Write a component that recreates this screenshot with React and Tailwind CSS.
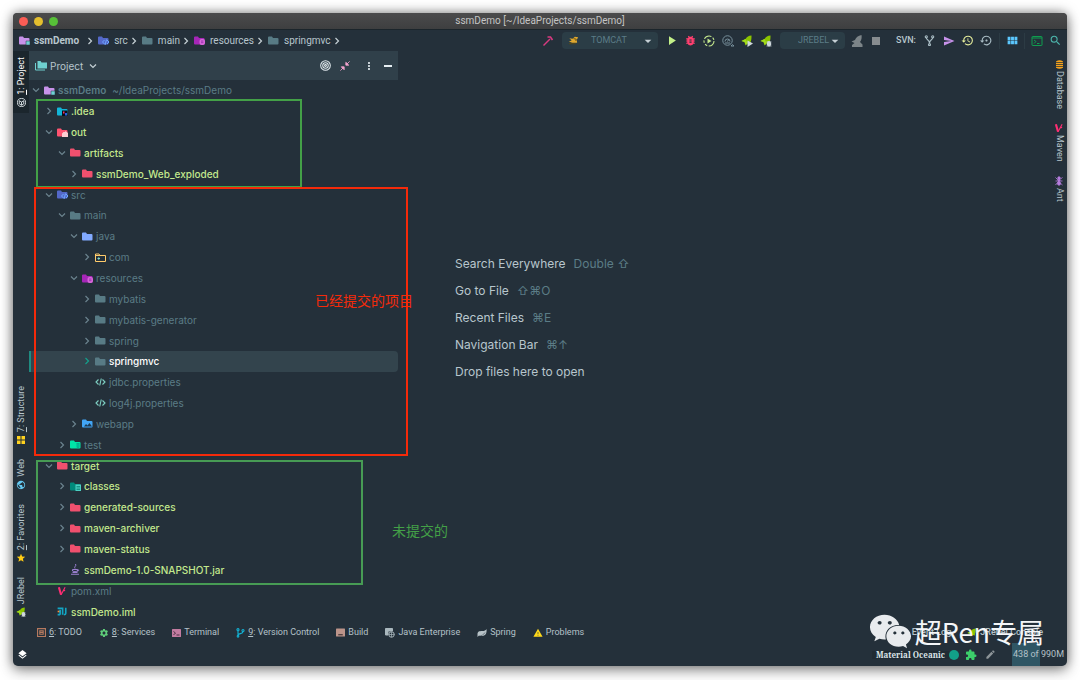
import {
  MdBugReport, MdPlayArrow, MdSearch, MdSend, MdHistory, MdSettingsBackupRestore, MdViewModule,
  MdLayers, MdStar, MdPublic, MdExtension, MdEdit, MdWarning, MdMoreVert,
  MdSettings, MdStop, MdArrowDropDown,
} from "react-icons/md";
import { FaWeixin } from "react-icons/fa";

const badges = {
  module: <path d="M14 10h8v8h-8z" fill="#6fd0d6" stroke="#24303a" />,
  src: (
    <g stroke="#6ea8ff" fill="none" strokeWidth="2">
      <path d="M13 8l-4 4 4 4M18 8l4 4-4 4M17 7l-3 11" />
    </g>
  ),
  resources: (
    <g>
      <rect x="11" y="6" width="11" height="12" rx="4" fill="#d667d8" />
      <path d="M14 10h5M14 13h5M16 9v6" stroke="#8e24aa" />
    </g>
  ),
  idea: (
    <g>
      <path d="M10 7h11v11H10z" fill="#0b0f1c" />
      <path d="M12 9h3v4h-3z" fill="#fe315d" />
      <path d="M16 12h4v5h-4z" fill="#2a62e0" />
    </g>
  ),
  out: <path d="M10 18v-7l3-3h3l1-2 5 4v8z" fill="#ffcdd2" />,
  lines: (
    <g>
      <path d="M11 5h11v13H11z" fill="#4dd0c4" />
      <path d="M13 9h7M13 12h7M13 15h7" stroke="#00796b" strokeWidth="1.4" />
    </g>
  ),
  image: <path d="M4 15l4-5 3 3 4-5 5 7z" fill="#1d3a52" />,
  test: <path d="M13 7h6M14 7v7a2 2 0 004 0V7" stroke="#00a884" fill="#00bfa5" strokeWidth="1.5" />,
};

function Folder({ color, badge }) {
  return (
    <svg viewBox="0 0 22 18" className="h-[9px] w-[11px] shrink-0" aria-hidden="true">
      <path d="M0 3a2 2 0 012-2h6l2 3h9a2 2 0 012 2v9a2 2 0 01-2 2H2a2 2 0 01-2-2z" fill={color} />
      {badge && badges[badge]}
    </svg>
  );
}

function PackageIcon() {
  return (
    <svg viewBox="0 0 22 18" className="h-[9px] w-[11px] shrink-0" fill="none" stroke="#ffcb6b" strokeWidth="2" aria-hidden="true">
      <path d="M1 2h7l2 3h11v12H1zM1 5h9" />
      <path d="M5 11h5M7.500 8.500v5" stroke="#7fd6c8" />
    </svg>
  );
}

function CodeIcon() {
  return (
    <svg viewBox="0 0 22 16" className="h-2 w-[11px] shrink-0" fill="none" stroke="#7fd1c4" strokeWidth="2.200" aria-hidden="true">
      <path d="M7 3L2 8l5 5M15 3l5 5-5 5M12.500 1l-3 14" />
    </svg>
  );
}

function JarIcon() {
  return (
    <svg viewBox="0 0 20 22" className="h-[11px] w-[10px] shrink-0" fill="none" stroke="#9a7fd0" strokeWidth="2" aria-hidden="true">
      <path d="M11 0c3 4-4 5-1 9M5 11h10v3q-5 3-10 0zM15 11c3 0 3 3 0 4M5 17h10M2 20.500h16" />
    </svg>
  );
}

function MavenIcon() {
  return (
    <svg viewBox="0 0 16 16" className="size-[10px] shrink-0" fill="none" stroke="#ff2d73" aria-hidden="true">
      <path d="M3 2l3.500 12" strokeWidth="3.400" />
      <path d="M6.500 14L13 2M9 8l4-1" strokeWidth="1.800" />
    </svg>
  );
}

function ImlIcon() {
  return (
    <svg viewBox="0 0 16 14" className="h-[9px] w-[10px] shrink-0" fill="none" stroke="#12a5c4" strokeWidth="2.600" aria-hidden="true">
      <path d="M1 2h8v10M14 1v9q0 2-3 2M1 12h4" />
      <path d="M1 7h5" stroke="#f78c3b" />
      <path d="M5 4v8" />
    </svg>
  );
}

function Chevron({ open, className = "text-[#6b838e]" }) {
  return (
    <svg viewBox="0 0 12 12" className={`size-3 shrink-0 ${className}`} fill="none" stroke="currentColor" strokeWidth="1.200" aria-hidden="true">
      <path d={open ? "M3 4.500l3 3 3-3" : "M4.500 3l3 3-3 3"} />
    </svg>
  );
}

function Rocket({ badge, gray, className = "size-3" }) {
  const fill = gray ? "#7c8488" : "#8bc400";
  return (
    <svg viewBox="0 0 24 24" className={`${className} shrink-0`} aria-hidden="true">
      {gray ? (
        <path d="M21 0c-7 1-11 5-13 10l-7 3 6 3-5 4v4h21v-5l-5-5c3-4 4-9 3-14z" fill={fill} />
      ) : (
        <g>
          <path d="M21 1c-6 0-9 3-12 7L1 12l6 2 2 7 4-4 6 1 0-4c2-4 2-8 2-13z" fill={fill} />
          <path d="M1 12l8-4 4 8-3 4-3-6z" fill="#a3dc1c" />
        </g>
      )}
      {badge === "play" && <path d="M13 11l11 6-11 7z" fill="#cfd8dc" />}
      {badge === "bug" && (
        <g>
          <rect x="14" y="12" width="8" height="11" rx="4" fill="#cfd8dc" />
          <path d="M13 14h10M13 18h10M13 22h10" stroke="#cfd8dc" strokeWidth="1.400" />
        </g>
      )}
    </svg>
  );
}

function Branch({ className = "size-3" }) {
  return (
    <svg viewBox="0 0 24 24" className={`${className} shrink-0`} fill="none" stroke="currentColor" strokeWidth="2.400" aria-hidden="true">
      <circle cx="5" cy="4" r="2.300" />
      <circle cx="19" cy="4" r="2.300" />
      <circle cx="12" cy="21" r="2.200" />
      <path d="M5 6c0 5 7 4 7 12M19 6c0 5-7 4-7 12" />
    </svg>
  );
}

function VcsIcon() {
  return (
    <svg viewBox="0 0 20 24" className="h-[10px] w-[9px] shrink-0" fill="none" stroke="#12b5d8" strokeWidth="2.600" aria-hidden="true">
      <circle cx="4" cy="4" r="2.500" />
      <circle cx="4" cy="20" r="2" />
      <circle cx="16" cy="6" r="2.500" />
      <path d="M4 7v11M16 9c0 6-12 3-12 8" />
    </svg>
  );
}

const indents = ["pl-px", "pl-[14px]", "pl-[27px]", "pl-[39px]", "pl-[52px]"];
const GREEN = "text-[#c3e88d] font-medium";
const MUTED = "text-[#5b7c86]";

const red = <Folder color="#f0506e" />;
const slate = <Folder color="#587b85" />;
const props = <CodeIcon />;

const tree = [
  { level: 1, open: false, name: ".idea", tone: GREEN, icon: <Folder color="#12b5d8" badge="idea" /> },
  { level: 1, open: true, name: "out", tone: GREEN, icon: <Folder color="#ff5370" badge="out" /> },
  { level: 2, open: true, name: "artifacts", tone: GREEN, icon: red },
  { level: 3, open: false, name: "ssmDemo_Web_exploded", tone: GREEN, icon: red },
  { level: 1, open: true, name: "src", tone: MUTED, icon: <Folder color="#5468c8" badge="src" /> },
  { level: 2, open: true, name: "main", tone: MUTED, icon: slate },
  { level: 3, open: true, name: "java", tone: MUTED, icon: <Folder color="#82aaff" /> },
  { level: 4, open: false, name: "com", tone: MUTED, icon: <PackageIcon /> },
  { level: 3, open: true, name: "resources", tone: MUTED, icon: <Folder color="#a626b8" badge="resources" /> },
  { level: 4, open: false, name: "mybatis", tone: MUTED, icon: slate },
  { level: 4, open: false, name: "mybatis-generator", tone: MUTED, icon: slate },
  { level: 4, open: false, name: "spring", tone: MUTED, icon: slate },
  { level: 4, open: false, name: "springmvc", tone: "text-white font-medium", icon: slate, selected: true },
  { level: 4, name: "jdbc.properties", tone: MUTED, icon: props },
  { level: 4, name: "log4j.properties", tone: MUTED, icon: props },
  { level: 3, open: false, name: "webapp", tone: MUTED, icon: <Folder color="#42a5f5" badge="image" /> },
  { level: 2, open: false, name: "test", tone: MUTED, icon: <Folder color="#00e6a8" badge="test" /> },
  { level: 1, open: true, name: "target", tone: GREEN, icon: red },
  { level: 2, open: false, name: "classes", tone: GREEN, icon: <Folder color="#00897b" badge="lines" /> },
  { level: 2, open: false, name: "generated-sources", tone: GREEN, icon: red },
  { level: 2, open: false, name: "maven-archiver", tone: GREEN, icon: red },
  { level: 2, open: false, name: "maven-status", tone: GREEN, icon: red },
  { level: 2, name: "ssmDemo-1.0-SNAPSHOT.jar", tone: GREEN, icon: <JarIcon /> },
  { level: 1, name: "pom.xml", tone: MUTED, icon: <MavenIcon /> },
  { level: 1, name: "ssmDemo.iml", tone: GREEN, icon: <ImlIcon /> },
];

function TreeRow({ level, open, name, tone, icon, selected }) {
  return (
    <li className="flex min-h-5 flex-1">
      <button
        type="button"
        className={`flex w-full items-center gap-[2px] ${indents[level]} ${selected ? "rounded-r-sm bg-[#33444d] shadow-[inset_2px_0_0_#1f8a80]" : ""}`}
      >
        {open === undefined ? <span className="w-3 shrink-0" /> : <Chevron open={open} className={selected ? "text-[#14a08c]" : undefined} />}
        <span className="flex w-3 shrink-0 items-center">{icon}</span>
        <span className={`whitespace-nowrap ${tone}`}>{name}</span>
      </button>
    </li>
  );
}

const crumbs = [
  { name: "src", icon: <Folder color="#5468c8" badge="src" /> },
  { name: "main", icon: slate },
  { name: "resources", icon: <Folder color="#a626b8" badge="resources" /> },
  { name: "springmvc", icon: slate },
];

function Crumb({ name, icon, bold }) {
  return (
    <li className="flex items-center">
      <a href={`#${name}`} className={`flex items-center ${bold ? "gap-1 font-bold" : "gap-[5px]"}`}>
        {icon}
        {name}
      </a>
      <Chevron className={bold ? "ml-[5px] text-[#c5d0d5]" : "text-[#c5d0d5]"} />
    </li>
  );
}

function Tool({ label, children }) {
  return (
    <button type="button" aria-label={label} className="flex h-5 w-[19px] shrink-0 items-center justify-center">
      {children}
    </button>
  );
}

function Picker({ label, value, width, pad, icon }) {
  return (
    <div className={`relative flex h-[17px] items-center rounded-sm bg-[#2b3d46] ${width}`}>
      {icon}
      <select aria-label={label} defaultValue={value} className={`h-full w-full appearance-none bg-transparent text-[9px] text-[#5b7c86] outline-none ${pad}`}>
        <option>{value}</option>
      </select>
      <MdArrowDropDown className="pointer-events-none absolute right-[2px] size-4 text-[#c5d0d5]" />
    </div>
  );
}

function SideTab({ text, mark, icon, active }) {
  return (
    <button type="button" className={`flex w-4 flex-col items-center gap-[3px] ${active ? "bg-[#1b262d] pb-[5px] pt-[6px] text-white" : ""}`}>
      <span className="rotate-180 whitespace-nowrap [writing-mode:vertical-rl]">
        {mark && <u>{mark}</u>}
        {text}
      </span>
      <span className="flex h-[10px] items-center">{icon}</span>
    </button>
  );
}

function RightTab({ text, icon }) {
  return (
    <button type="button" className="flex w-4 flex-col items-center gap-[2px]">
      <span className="flex h-[10px] items-center">{icon}</span>
      <span className="whitespace-nowrap [writing-mode:vertical-rl]">{text}</span>
    </button>
  );
}

function BottomTab({ mark, text, icon }) {
  return (
    <button type="button" className="flex items-center gap-[3px] whitespace-nowrap">
      {icon}
      <span>
        {mark && <u>{mark}</u>}
        {text}
      </span>
    </button>
  );
}

const hints = [
  ["Search Everywhere", "Double ⇧"],
  ["Go to File", "⇧⌘O"],
  ["Recent Files", "⌘E"],
  ["Navigation Bar", "⌘↑"],
  ["Drop files here to open", ""],
];

function TitleBar() {
  return (
    <header className="relative flex h-4 shrink-0 items-center justify-center rounded-t bg-linear-to-b from-[#4b4b4c] to-[#3e3f40] font-[Roboto,sans-serif] text-[#c4c4c4]">
      <div className="absolute left-[6px] flex gap-[6px]">
        <button type="button" aria-label="Close" className="size-[9px] rounded-full bg-[#fb5d55]" />
        <button type="button" aria-label="Minimize" className="size-[9px] rounded-full bg-[#e5bf2e]" />
        <button type="button" aria-label="Zoom" className="size-[9px] rounded-full bg-[#57c038]" />
      </div>
      <h1>ssmDemo [~/IdeaProjects/ssmDemo]</h1>
    </header>
  );
}

function Toolbar() {
  return (
    <div className="flex h-[22px] shrink-0 items-center justify-between border-t border-[#1b252b] pl-[6px] pr-[2px] font-[Roboto,sans-serif]">
      <ol className="flex items-center gap-[2px]">
        <Crumb name="ssmDemo" bold icon={<Folder color="#c792ea" badge="module" />} />
        {crumbs.map((c) => (
          <Crumb key={c.name} {...c} />
        ))}
      </ol>
      <div className="flex items-center">
        <Tool label="Build project">
          <svg viewBox="0 0 24 24" className="size-3" fill="none" stroke="#d83a80" aria-hidden="true">
            <path d="M3 21L16 8" strokeWidth="3" />
            <path d="M11 4h6l4 6" strokeWidth="3.200" />
          </svg>
        </Tool>
        <div className="mx-1">
          <Picker
            label="Run configuration"
            value="TOMCAT"
            width="w-24"
            pad="pl-[29px]"
            icon={
              <svg viewBox="0 0 24 18" className="pointer-events-none absolute left-[6px] h-[9px] w-[11px]" aria-hidden="true">
                <path d="M3 4l7 1 5-4 7 1-3 6 1 6H9l-7-3 6-2z" fill="#e0a82e" />
                <path d="M2 16h15M12 5l6 1-1 4" stroke="#5c4a12" strokeWidth="2" fill="none" />
              </svg>
            }
          />
        </div>
        <Tool label="Run"><MdPlayArrow className="size-[15px] text-[#c3f089]" /></Tool>
        <Tool label="Debug"><MdBugReport className="size-[13px] text-[#ff3f6f]" /></Tool>
        <Tool label="Run with coverage">
          <svg viewBox="0 0 24 24" className="size-3" fill="none" stroke="#c3e88d" aria-hidden="true">
            <circle cx="12" cy="12" r="10" strokeWidth="2.200" strokeDasharray="16 3 5 3 5 3" />
            <path d="M9 7l8 5-8 5z" fill="#c3e88d" stroke="none" />
          </svg>
        </Tool>
        <Tool label="Profile">
          <svg viewBox="0 0 24 24" className="size-3" fill="none" stroke="#78909c" strokeWidth="2" aria-hidden="true">
            <circle cx="11" cy="11" r="9.500" />
            <path d="M6 13a5 5 0 0110 0M11 13l3-5M6 16h10M18 22h6l-3-3z" />
          </svg>
        </Tool>
        <Tool label="Run with JRebel"><Rocket badge="play" /></Tool>
        <Tool label="Debug with JRebel"><Rocket badge="bug" /></Tool>
        <div className="ml-1 mr-[3px]">
          <Picker label="JRebel" value="JREBEL" width="w-[65px]" pad="pl-[18px]" />
        </div>
        <Tool label="Attach JRebel"><Rocket gray /></Tool>
        <Tool label="Stop"><MdStop className="size-4 text-[#878c8f]" /></Tool>
        <span className="pl-[10px] pr-1 text-[9px] font-medium">SVN:</span>
        <Tool label="Update project"><Branch className="size-[11px] text-[#a9bcc4]" /></Tool>
        <Tool label="Commit"><MdSend className="size-3 text-[#c792ea]" /></Tool>
        <Tool label="History"><MdHistory className="size-[13px] text-[#e6ee9c]" /></Tool>
        <Tool label="Rollback"><MdSettingsBackupRestore className="size-[13px] text-[#a9bcc4]" /></Tool>
        <span className="mx-[3px] h-4 w-px bg-[#2c3b44]" />
        <Tool label="Project structure"><MdViewModule className="size-[13px] text-[#5cc8ff]" /></Tool>
        <span className="mx-[2px] h-4 w-px bg-[#2c3b44]" />
        <Tool label="Run anything">
          <svg viewBox="0 0 24 20" className="h-[10px] w-3" fill="none" stroke="#0f9d4f" strokeWidth="2" aria-hidden="true">
            <rect x="2" y="1" width="20" height="18" rx="1" />
            <path d="M2 4h20M6 8l4 3-4 4M12 15h5" />
          </svg>
        </Tool>
        <Tool label="Search"><MdSearch className="size-[13px] text-[#4db6ac]" /></Tool>
      </div>
    </div>
  );
}

function ProjectPanel() {
  return (
    <section className="flex w-[369px] shrink-0 flex-col">
      <div className="flex h-[29px] shrink-0 items-center justify-between bg-[#30404a] pl-[6px] pr-px">
        <button type="button" className="flex items-center gap-[3px]">
          <svg viewBox="0 0 24 20" className="h-[11px] w-3" aria-hidden="true">
            <path d="M5 1h6l2 3h11v12H5z" fill="#6fd0d0" />
            <path d="M1 5v14h19" fill="none" stroke="#6fd0d0" strokeWidth="2" />
          </svg>
          Project
          <Chevron open className="ml-px text-[#c5d0d5]" />
        </button>
        <div className="flex items-center text-[#e6eef2]">
          <Tool label="Locate file">
            <svg viewBox="0 0 24 24" className="size-[11px]" fill="none" stroke="currentColor" strokeWidth="2.200" aria-hidden="true">
              <circle cx="12" cy="12" r="10.500" />
              <circle cx="12" cy="12" r="6" />
              <circle cx="12" cy="12" r="2" />
            </svg>
          </Tool>
          <Tool label="Collapse all">
            <svg viewBox="0 0 24 24" className="size-[10px]" stroke="#f8a5d0" strokeWidth="2" fill="#f8a5d0" aria-hidden="true">
              <path d="M23 1l-8 8M14 3v7h7zM1 23l8-8M3 14h7v7z" />
            </svg>
          </Tool>
          <span className="w-[5px]" />
          <Tool label="Options"><MdMoreVert className="size-3" /></Tool>
          <Tool label="Hide"><span className="h-[2px] w-2 bg-current" /></Tool>
        </div>
      </div>
      <ul className="flex flex-1 flex-col">
        <li className="flex min-h-5 flex-1">
          <button type="button" className="flex w-full items-center gap-[2px] pl-px">
            <Chevron open />
            <span className="flex w-3 shrink-0"><Folder color="#c792ea" badge="module" /></span>
            <span className={MUTED}>
              <b className="font-semibold">ssmDemo</b>
              <span className="ml-[6px]">~/IdeaProjects/ssmDemo</span>
            </span>
          </button>
        </li>
        {tree.map((row) => (
          <TreeRow key={row.name} {...row} />
        ))}
      </ul>
    </section>
  );
}

function BottomBar() {
  return (
    <div className="flex h-[21px] shrink-0 items-center justify-between pl-6 pr-6 font-[Roboto,sans-serif] text-[9px] text-[#b4c2c9]">
      <div className="flex items-center gap-[17px]">
        <BottomTab mark="6" text=": TODO" icon={
          <svg viewBox="0 0 16 16" className="size-[9px]" fill="none" stroke="#b5795f" strokeWidth="2" aria-hidden="true">
            <path d="M1 1h14v14H1zM5 4v8M11 4v8M5 5h6M5 8h6M5 11h6" />
          </svg>
        } />
        <BottomTab mark="8" text=": Services" icon={<MdSettings className="size-[10px] text-[#5fce7a]" />} />
        <BottomTab text="Terminal" icon={
          <svg viewBox="0 0 18 16" className="h-2 w-[9px]" aria-hidden="true">
            <rect width="18" height="16" rx="1" fill="#c27ba0" />
            <path d="M3 5l4 3-4 4M9 12h6" stroke="#4a2f42" strokeWidth="2" fill="none" />
          </svg>
        } />
        <BottomTab mark="9" text=": Version Control" icon={<VcsIcon />} />
        <BottomTab text="Build" icon={
          <svg viewBox="0 0 16 16" className="size-[9px]" aria-hidden="true">
            <rect y="1" width="16" height="14" rx="1" fill="#bc948a" />
            <path d="M4 12h8" stroke="#3b2f33" strokeWidth="2" />
          </svg>
        } />
        <BottomTab text="Java Enterprise" icon={
          <svg viewBox="0 0 20 20" className="size-[10px]" fill="none" stroke="#a9b7bd" strokeWidth="2" aria-hidden="true">
            <path d="M1 14V1h14v5H6v8z" fill="#a9b7bd" />
            <circle cx="13" cy="13" r="5.500" />
            <path d="M8 13h11M13 8v10" strokeWidth="1.400" />
          </svg>
        } />
        <BottomTab text="Spring" icon={
          <svg viewBox="0 0 20 16" className="h-2 w-[10px]" aria-hidden="true">
            <path d="M19 0c1 9-2 14-10 14H3l-2 2V9c1-5 6-5 10-5s6-1 8-4z" fill="#b7c2c7" />
            <path d="M3 14c6 0 10-2 13-7" stroke="#24303a" fill="none" />
          </svg>
        } />
        <BottomTab text="Problems" icon={<MdWarning className="size-[10px] text-[#ffd91a]" />} />
      </div>
      <div className="flex items-center gap-4 font-medium">
        <BottomTab text="Event Log" />
        <BottomTab text="JRebel Console" icon={<Rocket className="size-[10px]" />} />
      </div>
    </div>
  );
}

function StatusBar() {
  return (
    <footer className="flex h-[23px] shrink-0 items-center justify-between pl-1 text-[#b4c2c9]">
      <button type="button" aria-label="Tool windows"><MdLayers className="size-[11px] text-white" /></button>
      <div className="flex h-full items-center">
        <span className="bg-[#202b33] px-1 font-['Noto_Serif','DejaVu_Serif_Condensed','DejaVu_Serif',serif] text-[8px] font-bold text-[#dbe4e8]">Material Oceanic</span>
        <span className="size-[10px] rounded-full bg-[#12a088]" />
        <button type="button" aria-label="Plugins" className="ml-[6px]"><MdExtension className="size-3 text-[#3ccf6b]" /></button>
        <button type="button" aria-label="Edit" className="ml-2"><MdEdit className="size-[11px] text-[#8c9498]" /></button>
        <span className="ml-4 flex h-full items-center bg-linear-to-r from-[#2f5664] from-50% to-transparent to-50% pl-px pr-[3px] font-[Roboto,sans-serif] text-[9px]">438 of 990M</span>
      </div>
    </footer>
  );
}

function Annotations() {
  return (
    <div className="pointer-events-none absolute inset-0 font-['Noto_Sans_CJK_SC',sans-serif] leading-none">
      <div className="absolute left-[23px] top-[86px] h-[89px] w-[266px] border-2 border-[#43a047]" />
      <div className="absolute left-[23px] top-[447px] h-[125px] w-[327px] border-2 border-[#479b54]" />
      <div className="absolute left-[21px] top-[174px] h-[269px] w-[374px] border-2 border-[#f52a0a]" />
      <p className="absolute left-[302px] top-[280px] whitespace-nowrap text-[14px] text-[#f52a0a]">已经提交的项目</p>
      <p className="absolute left-[379px] top-[510px] whitespace-nowrap text-[14px] text-[#43a047]">未提交的</p>
      <div className="absolute bottom-[13px] right-[23px] flex items-center gap-[3px] text-[#f4f6f8]">
        <FaWeixin className="size-[43px] text-[#e8ebee]" />
        <span className="whitespace-nowrap text-[27px]">超Ren专属</span>
      </div>
    </div>
  );
}

export default function App() {
  return (
    <div className="flex min-h-screen bg-white px-[13px] pb-[14px] pt-[13px] font-[Inter,'Noto_Sans','DejaVu_Sans',sans-serif] text-[10px] leading-none">
      <div className="relative flex flex-1 flex-col rounded-[5px] bg-[#24303a] text-[#b8c6cd] shadow-[0_0_12px_rgba(0,0,0,0.5),0_6px_14px_rgba(0,0,0,0.25)]">
        <TitleBar />
        <Toolbar />
        <div className="flex flex-1">
          <nav className="flex w-4 shrink-0 flex-col justify-between pb-[5px] font-[Roboto,sans-serif] text-[9px]">
            <SideTab active mark="1" text=": Project" icon={
              <svg viewBox="0 0 20 20" className="size-[9px]" fill="none" stroke="#dfe7ea" strokeWidth="2" aria-hidden="true">
                <circle cx="10" cy="10" r="9" />
                <path d="M5 6l5 3 5-3M10 9v7M5 6v7l5 3 5-3V6" />
              </svg>
            } />
            <div className="flex flex-col gap-[14px]">
              <SideTab mark="7" text=": Structure" icon={
                <svg viewBox="0 0 16 16" className="size-2" fill="#ffd21e" aria-hidden="true">
                  <path d="M0 0h7v7H0zM9 0h7v7H9zM0 9h7v7H0zM9 9h7v7H9z" />
                </svg>
              } />
              <SideTab text="Web" icon={<MdPublic className="size-[10px] text-[#64c8f0]" />} />
              <SideTab mark="2" text=": Favorites" icon={<MdStar className="size-[10px] text-[#ffcb14]" />} />
              <SideTab text="JRebel" icon={<Rocket badge="bug" className="size-[10px]" />} />
            </div>
          </nav>
          <ProjectPanel />
          <main className="flex flex-1 flex-col justify-center pb-[38px] pl-[57px] text-[12px]">
            {hints.map(([label, keys]) => (
              <p key={label} className="flex h-[27px] items-center gap-2 whitespace-nowrap">
                {label}
                {keys && <kbd className="font-[Inter,'DejaVu_Sans',sans-serif] text-[#5b7c86]">{keys}</kbd>}
              </p>
            ))}
          </main>
          <nav className="flex w-4 shrink-0 flex-col gap-[14px] pt-2 font-[Roboto,sans-serif] text-[9px]">
            <RightTab text="Database" icon={
              <svg viewBox="0 0 16 20" className="h-[9px] w-[7px]" fill="#f5a21b" aria-hidden="true">
                <path d="M0 3q8-5 16 0v2H0zM0 6.500h16v3H0zM0 11h16v3H0zM0 15.500h16v2q-8 4-16 0z" />
              </svg>
            } />
            <RightTab text="Maven" icon={<MavenIcon />} />
            <RightTab text="Ant" icon={
              <svg viewBox="0 0 16 20" className="h-[10px] w-2" fill="#b77ee0" stroke="#b77ee0" strokeWidth="1.600" aria-hidden="true">
                <circle cx="8" cy="4" r="2.500" />
                <circle cx="8" cy="9" r="2" />
                <ellipse cx="8" cy="15" rx="3" ry="3.500" />
                <path d="M1 3l6 6 8-6M1 10h14M1 18l6-7 8 7" fill="none" />
              </svg>
            } />
          </nav>
        </div>
        <BottomBar />
        <StatusBar />
        <Annotations />
      </div>
    </div>
  );
}
